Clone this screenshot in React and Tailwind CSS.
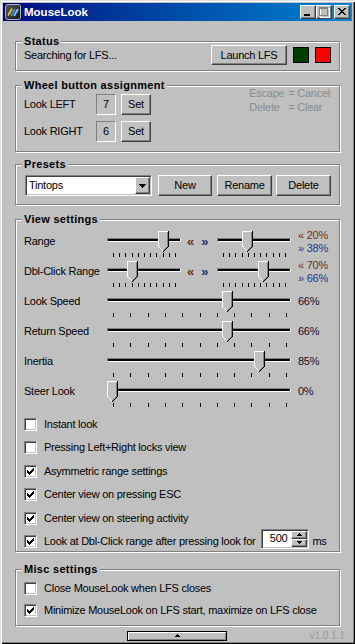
import React from "react";

const RAISED =
  "bg-[#c0c0c0] border border-t-white border-l-white border-r-[#404040] border-b-[#404040] shadow-[inset_-1px_-1px_0_#808080]";

function RaisedBtn({ className = "", children }) {
  return (
    <div className={"flex items-center justify-center whitespace-nowrap " + RAISED + " " + className}>
      {children}
    </div>
  );
}

function Group({ title, className = "", children }) {
  return (
    <div
      className={
        "mx-[15px] border border-[#808080] shadow-[1px_1px_0_#ffffff,inset_1px_1px_0_#ffffff] px-[8px] " +
        className
      }
    >
      <div className="-mt-[7px] h-[13px] leading-[13px] font-bold whitespace-nowrap tracking-[0.3px]">
        <span className="-ml-[2px] bg-[#c0c0c0] px-[2px]">{title}</span>
      </div>
      {children}
    </div>
  );
}

function Thumb({ left }) {
  const parts = [];
  parts.push(<rect key="f" x="0" y="0" width="11" height="16" fill="#c0c0c0" />);
  for (let k = 1; k <= 4; k++) {
    parts.push(<rect key={"fr" + k} x={k} y={15 + k} width={11 - 2 * k} height="1" fill="#c0c0c0" />);
  }
  parts.push(<rect key="t" x="0" y="0" width="10" height="1" fill="#ffffff" />);
  parts.push(<rect key="l" x="0" y="0" width="1" height="16" fill="#ffffff" />);
  parts.push(<rect key="r" x="10" y="0" width="1" height="16" fill="#000000" />);
  parts.push(<rect key="ir" x="9" y="1" width="1" height="15" fill="#808080" />);
  for (let k = 1; k <= 4; k++) {
    parts.push(<rect key={"w" + k} x={k} y={15 + k} width="1" height="1" fill="#ffffff" />);
    parts.push(<rect key={"g" + k} x={9 - k} y={15 + k} width="1" height="1" fill="#808080" />);
    parts.push(<rect key={"b" + k} x={10 - k} y={15 + k} width="1" height="1" fill="#000000" />);
  }
  parts.push(<rect key="pt" x="5" y="20" width="1" height="1" fill="#000000" />);
  return (
    <svg
      className="absolute top-0"
      style={{ left }}
      width="11"
      height="21"
      viewBox="0 0 11 21"
      shapeRendering="crispEdges"
    >
      {parts}
    </svg>
  );
}

function Slider({ wide, thumb }) {
  const width = wide ? 184 : 74;
  const step = wide ? 17.3 : 6.2;
  const ticks = [];
  for (let i = 0; i <= 10; i++) ticks.push(Math.round(6 + i * step));
  return (
    <div className={"flex flex-col shrink-0 " + (wide ? "w-[184px]" : "w-[74px]")}>
      <div className="relative h-[21px]">
        <div className="mt-[7px] h-[4px] border border-t-[#808080] border-l-[#808080] border-b-white border-r-white bg-black" />
        <Thumb left={thumb} />
      </div>
      <svg className="mt-[1px]" width={width} height="4" shapeRendering="crispEdges">
        {ticks.map((x, i) => (
          <rect key={i} x={x} y="0" width="1" height="4" fill="#000000" />
        ))}
      </svg>
    </div>
  );
}

function CheckBox({ checked }) {
  const cols = [
    [0, 2],
    [1, 3],
    [2, 4],
    [3, 3],
    [4, 2],
    [5, 1],
    [6, 0],
  ];
  return (
    <div className="w-[13px] h-[13px] shrink-0 flex items-center justify-center bg-white border border-t-[#808080] border-l-[#808080] border-b-white border-r-white shadow-[inset_1px_1px_0_#404040,inset_-1px_-1px_0_#c0c0c0]">
      {checked && (
        <svg width="7" height="7" viewBox="0 0 7 7" shapeRendering="crispEdges">
          {cols.map(([x, y]) => (
            <rect key={x} x={x} y={y} width="1" height="3" fill="#000000" />
          ))}
        </svg>
      )}
    </div>
  );
}

function Spinner() {
  return (
    <div className="self-start -mt-[6px] ml-[6px] w-[48px] h-[20px] shrink-0 flex bg-white border border-t-[#808080] border-l-[#808080] border-b-white border-r-white shadow-[inset_1px_1px_0_#404040,inset_-1px_-1px_0_#c0c0c0] p-[1px]">
      <div className="flex-1 flex items-center justify-end pr-[4px]">500</div>
      <div className="flex flex-col w-[16px]">
        <RaisedBtn className="h-[8px] w-[16px]">
          <svg width="5" height="3" shapeRendering="crispEdges">
            <rect x="2" y="0" width="1" height="1" fill="#000" />
            <rect x="1" y="1" width="3" height="1" fill="#000" />
            <rect x="0" y="2" width="5" height="1" fill="#000" />
          </svg>
        </RaisedBtn>
        <RaisedBtn className="h-[8px] w-[16px]">
          <svg width="5" height="3" shapeRendering="crispEdges">
            <rect x="0" y="0" width="5" height="1" fill="#000" />
            <rect x="1" y="1" width="3" height="1" fill="#000" />
            <rect x="2" y="2" width="1" height="1" fill="#000" />
          </svg>
        </RaisedBtn>
      </div>
    </div>
  );
}

function CheckRow({ label, checked, spinner }) {
  return (
    <div className="flex h-[13px] items-center whitespace-nowrap">
      <CheckBox checked={checked} />
      <span className="ml-[7px]">{label}</span>
      {spinner && (
        <>
          <Spinner />
          <span className="ml-[3px]">ms</span>
        </>
      )}
    </div>
  );
}

function AppIcon() {
  return (
    <svg width="16" height="16" viewBox="0 0 16 16">
      <defs>
        <linearGradient id="ig" x1="0" y1="0" x2="1" y2="1">
          <stop offset="0" stopColor="#5a5a5a" />
          <stop offset="1" stopColor="#111111" />
        </linearGradient>
      </defs>
      <rect x="0.5" y="0.5" width="15" height="15" rx="2.5" fill="url(#ig)" stroke="#b0b0b0" />
      <path d="M3 11.5 L7 4.5" stroke="#f2c21b" strokeWidth="1.8" />
      <path d="M6 12 L10 5" stroke="#3a8ee8" strokeWidth="1.8" />
      <path d="M9 12 L13 5" stroke="#7cc8ff" strokeWidth="1.8" />
    </svg>
  );
}

function CapBtn({ className = "", children }) {
  return (
    <div className={"w-[16px] h-[14px] flex items-start justify-start " + RAISED + " " + className}>
      <svg width="14" height="12" viewBox="0 0 14 12" shapeRendering="crispEdges">
        {children}
      </svg>
    </div>
  );
}

const sliderRows = [
  { label: "Range", range: true, t1: 51, t2: 25, a: "« 20%", b: "» 38%" },
  { label: "Dbl-Click Range", range: true, t1: 20, t2: 41, a: "« 70%", b: "» 66%" },
  { label: "Look Speed", t: 115, v: "66%" },
  { label: "Return Speed", t: 115, v: "66%" },
  { label: "Inertia", t: 147, v: "85%" },
  { label: "Steer Look", t: 0, v: "0%" },
];

const viewChecks = [
  ["Instant look", false],
  ["Pressing Left+Right locks view", false],
  ["Asymmetric range settings", true],
  ["Center view on pressing ESC", true],
  ["Center view on steering activity", true],
];

export default function App() {
  const closeX = [];
  for (let i = 0; i < 7; i++) {
    closeX.push(<rect key={"a" + i} x={3 + i} y={2 + i} width="2" height="1" fill="#000" />);
    closeX.push(<rect key={"b" + i} x={9 - i} y={2 + i} width="2" height="1" fill="#000" />);
  }
  return (
    <div className="relative w-[355px] h-[644px] overflow-hidden flex flex-col bg-[#c0c0c0] text-black text-[11px] leading-[13px] tracking-[-0.25px] font-['Liberation_Sans',Arial,sans-serif] shadow-[inset_1px_1px_0_#dfdfdf,inset_2px_2px_0_#ffffff,inset_-1px_-1px_0_#000000,inset_-2px_-2px_0_#808080]">
      {/* Title bar */}
      <div className="mx-[3px] mt-[3px] h-[18px] shrink-0 flex items-center pl-[2px] pr-[2px] bg-linear-to-r from-[#000080] to-[#1084d0]">
        <AppIcon />
        <div className="ml-[3px] text-white font-bold text-[11.5px] leading-[14px] tracking-normal">MouseLook</div>
        <div className="ml-auto flex items-center">
          <CapBtn>
            <rect x="3" y="8" width="6" height="2" fill="#000" />
          </CapBtn>
          <CapBtn>
            <rect x="3" y="2" width="9" height="9" fill="none" stroke="#ffffff" />
            <rect x="2.5" y="1.5" width="8" height="8" fill="none" stroke="#808080" />
            <rect x="2" y="2" width="9" height="1" fill="#808080" />
          </CapBtn>
          <CapBtn className="ml-[2px]">{closeX}</CapBtn>
        </div>
      </div>

      {/* Status */}
      <Group title="Status" className="mt-[20px] pb-[5px]">
        <div className="-mt-[3px] h-[20px] flex items-center">
          <div className="flex-1 whitespace-nowrap">Searching for LFS...</div>
          <RaisedBtn className="w-[76px] h-[20px]">Launch LFS</RaisedBtn>
          <div className="ml-[6px] w-[16px] h-[16px] border border-black bg-[#003c00]" />
          <div className="ml-[6px] w-[16px] h-[16px] border border-black bg-[#ff0000]" />
        </div>
      </Group>

      {/* Wheel button assignment */}
      <Group title="Wheel button assignment" className="mt-[14px] pb-[9px]">
        <div className="flex items-start">
          <div className="mt-[2px] flex flex-col gap-[6px]">
            {[
              ["Look LEFT", "7"],
              ["Look RIGHT", "6"],
            ].map(([l, n]) => (
              <div key={l} className="flex items-center h-[21px]">
                <div className="w-[72px] whitespace-nowrap">{l}</div>
                <div className="w-[20px] h-[21px] flex items-center justify-center border border-t-[#808080] border-l-[#808080] border-b-white border-r-white">
                  {n}
                </div>
                <RaisedBtn className="ml-[5px] w-[30px] h-[21px]">Set</RaisedBtn>
              </div>
            ))}
          </div>
          <div className="ml-auto mr-[1px] -mt-[6px] grid grid-cols-[39px_auto] leading-[14px] text-[#8c8c8c] whitespace-nowrap">
            <span>Escape</span>
            <span>= Cancel</span>
            <span>Delete</span>
            <span>= Clear</span>
          </div>
        </div>
      </Group>

      {/* Presets */}
      <Group title="Presets" className="mt-[12px] pb-[8px]">
        <div className="mt-[4px] h-[21px] flex items-center">
          <div className="ml-[1px] w-[127px] h-[21px] flex p-[1px] bg-white border border-t-[#808080] border-l-[#808080] border-b-white border-r-white shadow-[inset_1px_1px_0_#404040,inset_-1px_-1px_0_#c0c0c0]">
            <div className="flex-1 flex items-center pl-[2px]">Tintops</div>
            <RaisedBtn className="w-[15px] h-[17px]">
              <svg width="7" height="4" shapeRendering="crispEdges">
                <rect x="0" y="0" width="7" height="1" fill="#000" />
                <rect x="1" y="1" width="5" height="1" fill="#000" />
                <rect x="2" y="2" width="3" height="1" fill="#000" />
                <rect x="3" y="3" width="1" height="1" fill="#000" />
              </svg>
            </RaisedBtn>
          </div>
          <RaisedBtn className="ml-[6px] w-[54px] h-[21px]">New</RaisedBtn>
          <RaisedBtn className="ml-[5px] w-[55px] h-[21px]">Rename</RaisedBtn>
          <RaisedBtn className="ml-[4px] w-[55px] h-[21px]">Delete</RaisedBtn>
        </div>
      </Group>

      {/* View settings */}
      <Group title="View settings" className="mt-[14px] pb-[3px]">
        <div className="mt-[5px] flex flex-col">
          {sliderRows.map((r) => (
            <div key={r.label} className="flex h-[30px]">
              <div className="w-[83px] h-[21px] flex items-center whitespace-nowrap">{r.label}</div>
              {r.range ? (
                <>
                  <Slider thumb={r.t1} />
                  <div className="w-[36px] h-[21px] flex items-center pl-[6px] gap-[7px] font-bold text-[13px] tracking-normal">
                    <span className="text-[#6a3408]">«</span>
                    <span className="text-[#14306e]">»</span>
                  </div>
                  <Slider thumb={r.t2} />
                  <div className="ml-[7px] h-[21px] flex flex-col justify-center leading-[13px] whitespace-nowrap">
                    <span className="text-[#7a2a10]">{r.a}</span>
                    <span className="text-[#1a3a8a]">{r.b}</span>
                  </div>
                </>
              ) : (
                <>
                  <Slider wide thumb={r.t} />
                  <div className="ml-[7px] h-[21px] flex items-center text-[#101030]">{r.v}</div>
                </>
              )}
            </div>
          ))}
        </div>
        <div className="mt-[7px] flex flex-col gap-[10.4px]">
          {viewChecks.map(([l, c]) => (
            <CheckRow key={l} label={l} checked={c} />
          ))}
          <CheckRow label="Look at Dbl-Click range after pressing look for" checked spinner />
        </div>
      </Group>

      {/* Misc settings */}
      <Group title="Misc settings" className="mt-[17px] pb-[8px]">
        <div className="mt-[6px] flex flex-col gap-[9px]">
          <CheckRow label="Close MouseLook when LFS closes" checked={false} />
          <CheckRow label="Minimize MouseLook on LFS start, maximize on LFS close" checked />
        </div>
      </Group>

      {/* Bottom strip */}
      <div className="mt-[5px] h-[10px] flex items-center">
        <div className="w-[127px]" />
        <div className="w-[100px] h-[10px] border border-black flex items-center justify-center bg-[#c0c0c0] shadow-[inset_1px_1px_0_#ffffff,inset_-1px_-1px_0_#808080]">
          <svg width="5" height="3" shapeRendering="crispEdges">
            <rect x="2" y="0" width="1" height="1" fill="#000" />
            <rect x="1" y="1" width="3" height="1" fill="#000" />
            <rect x="0" y="2" width="5" height="1" fill="#000" />
          </svg>
        </div>
        <div className="flex-1 flex justify-end pr-[10px] text-[10px] leading-[10px] tracking-normal text-[#9a9a9a]">v1.0.1.1</div>
      </div>
    </div>
  );
}
